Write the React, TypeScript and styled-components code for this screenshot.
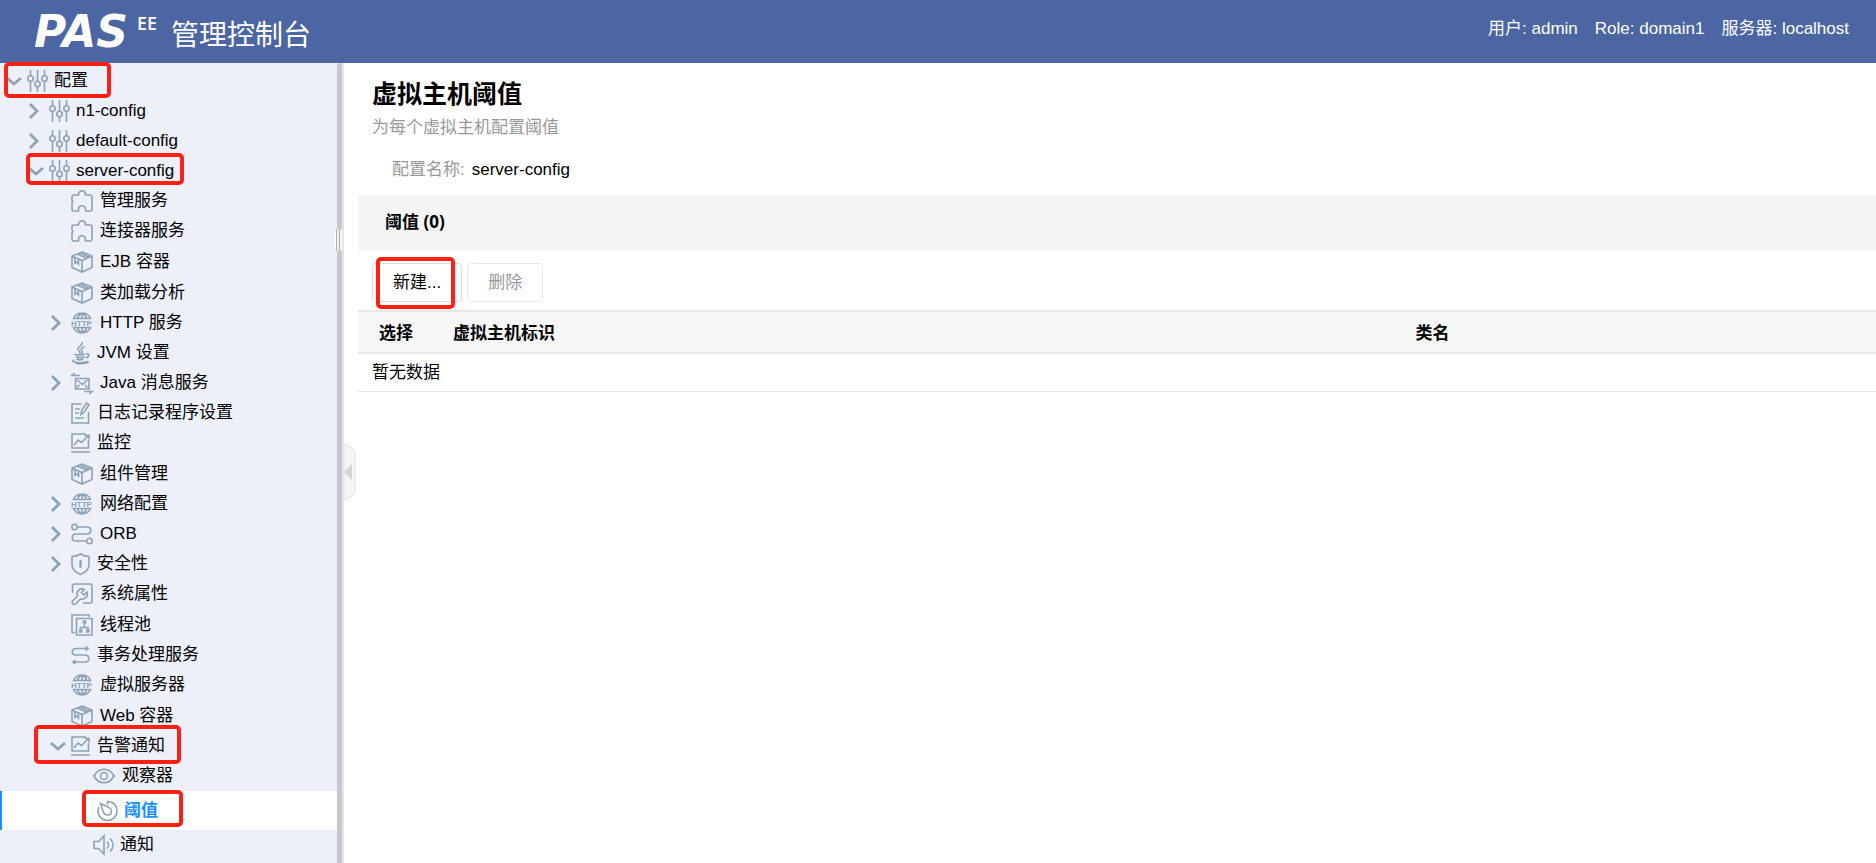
import React from "react";
import styled, { createGlobalStyle, css } from "styled-components";

const GlobalStyle = createGlobalStyle`
  * { box-sizing: border-box; }
  body {
    margin: 0;
    background: #ffffff;
    color: #000000;
    font-family: "Liberation Sans", "Noto Sans CJK SC", sans-serif;
    font-size: 17px;
    line-height: 24px;
  }
`;

const Page = styled.div`
  display: flex;
  flex-direction: column;
  height: 100vh;
  overflow: hidden;
`;

const TopBar = styled.header`
  flex: none;
  display: flex;
  justify-content: space-between;
  height: 63px;
  padding: 0 27px 0 34px;
  background: #4c66a3;
  color: #ffffff;
`;

const Brand = styled.div`
  display: flex;
  align-items: flex-start;
`;

const LogoText = styled.span`
  margin-top: 10px;
  font: italic bold 44px/44px "DejaVu Sans", sans-serif;
`;

const Edition = styled.sup`
  margin: 13px 14px 0 9px;
  font: 600 18px/20px "Open Sans", sans-serif;
`;

const ProductName = styled.span`
  margin-top: 16px;
  font-size: 28px;
  line-height: 40px;
`;

const SessionInfo = styled.div`
  display: flex;
  gap: 17px;
  padding-top: 17px;
  white-space: nowrap;
`;

const Body = styled.div`
  flex: 1;
  display: flex;
  min-height: 0;
`;

const Sidebar = styled.nav`
  flex: none;
  width: 337px;
  padding-top: 3px;
  background: #edf0f8;
`;

const TreeList = styled.ul`
  margin: 0;
  padding: 0;
  list-style: none;
`;

const Row = styled.div<{ $depth: number; $tall?: boolean; $selected?: boolean }>`
  position: relative;
  display: flex;
  align-items: center;
  height: ${(p) => (p.$selected ? 39 : p.$tall ? 31 : 30)}px;
  padding-left: ${(p) => 5 + p.$depth * 22}px;
  ${(p) =>
    p.$selected &&
    css`
      padding-left: ${7 + p.$depth * 22}px;
      border-left: 2px solid #1890ff;
      background: #ffffff;
      color: #1890ff;
      font-weight: bold;
    `}
`;

const Toggle = styled.button`
  display: flex;
  align-items: center;
  width: 22px;
  height: 22px;
  padding: 0;
  border: 0;
  background: none;
`;

const ToggleSpace = styled.span`
  width: 22px;
`;

const ItemLink = styled.a`
  display: flex;
  align-items: center;
  gap: 7px;
  color: inherit;
  text-decoration: none;
  white-space: nowrap;
`;

const Glyph = styled.svg`
  flex: none;
  display: block;
  fill: none;
  stroke: #8ea2b6;
  stroke-width: 1.6;
  overflow: visible;
`;

const Mark = styled.span<{ $top: number; $left: number; $width: number; $height: number }>`
  position: absolute;
  z-index: 2;
  top: ${(p) => p.$top}px;
  left: ${(p) => p.$left}px;
  width: ${(p) => p.$width}px;
  height: ${(p) => p.$height}px;
  border: 4px solid #ff2014;
  border-radius: 5px;
  pointer-events: none;
`;

const Splitter = styled.div`
  position: relative;
  flex: none;
  width: 7px;
  border-right: 2px solid #e6e6e6;
  background: #c5c9ce;
  border-top-left-radius: 3px;
`;

const Grip = styled.span`
  position: absolute;
  top: 166px;
  left: -2px;
  width: 7px;
  height: 22px;
  border: 1px solid #ffffff;
  border-width: 0 1px;
  background: linear-gradient(to right, #b0b0b0 1px, #eeeeee 1px 3px, #b0b0b0 3px 4px, #eeeeee 4px);
`;

const CollapseButton = styled.button`
  position: absolute;
  top: 380px;
  left: 7px;
  width: 12px;
  height: 58px;
  padding: 0;
  border: 0;
  background: none;
`;

const Main = styled.main`
  flex: 1;
  min-width: 0;
  padding: 14px 0 0 14px;
`;

const Title = styled.h1`
  margin: 0 0 0 14px;
  font-size: 25px;
  line-height: 34px;
`;

const Description = styled.p`
  margin: 5px 0 0 14px;
  color: #999999;
`;

const Property = styled.dl`
  display: flex;
  gap: 7px;
  margin: 18px 0 13px 34px;
  dt { color: #999999; }
  dd { margin: 0; }
`;

const TableTitle = styled.h2`
  margin: 0;
  padding: 0 0 1px 27px;
  background: #f4f4f4;
  font: bold 17px/54px "Open Sans", "Noto Sans CJK SC", sans-serif;
`;

const Actions = styled.div`
  display: flex;
  gap: 5px;
  padding: 13px 14px 8px;
`;

const ActionSlot = styled.span`
  position: relative;
`;

const ActionButton = styled.button`
  height: 39px;
  padding: 0 20px;
  border: 1px solid #d9dbe6;
  border-radius: 4px;
  background: #ffffff;
  color: #000000;
  font: inherit;
  &:disabled {
    border-color: #e9eaf2;
    color: #999999;
  }
`;

const DataTable = styled.table`
  width: 100%;
  table-layout: fixed;
  border-collapse: separate;
  border-spacing: 0;
  th {
    height: 44px;
    padding: 3px 14px 0;
    border: 2px solid #e7e7e7;
    border-width: 2px 0;
    background: #f6f6f6;
    text-align: left;
  }
  th:first-child {
    width: 81px;
    padding: 3px 0 0 21px;
  }
  th:nth-child(2) { width: 63.4%; }
  td {
    height: 38px;
    padding: 0 14px;
    border-bottom: 1px solid #e7e7e7;
  }
`;

type IconName =
  | "sliders" | "puzzle" | "cube" | "http" | "java" | "message" | "log" | "chart"
  | "orb" | "shield" | "wrench" | "pool" | "transfer" | "eye" | "gauge" | "speaker";

const iconWidths: Partial<Record<IconName, number>> = {
  sliders: 20, java: 19, log: 19, chart: 19, shield: 19, transfer: 19, gauge: 20, speaker: 20,
};

const tallIcons: IconName[] = ["cube", "pool"];

const drawings: Record<IconName, React.ReactNode> = {
  sliders: (
    <>
      <path d="M3.5 0v6M3.5 11v11M10.5 0v11.5M10.5 17v5M17.5 0v6M17.5 11v11" />
      <circle cx="3.5" cy="8.5" r="2.7" /><circle cx="10.5" cy="14" r="2.7" /><circle cx="17.5" cy="8.5" r="2.7" />
    </>
  ),
  puzzle: <path d="M3 5h4.5C7.5-.5 14.5-.5 14.5 5H19q2 0 2 2v12q0 2-2 2h-4.5v-1.5c0-5-7-5-7 0V21H3q-2 0-2-2v-6.5c1-.5 1-2 0-2.500V7q0-2 2-2z" />,
  cube: (
    <>
      <path d="M11 1l10 4v11.5L11 21 1 16.500V5zM1 5l10 4.500L21 5M11 9.500V21" />
      <path d="M6 3l10 4.300M9 2l9.500 4.200M4 6.800v5.500l1.700-1.500L7.500 13V8.500" />
    </>
  ),
  http: (
    <>
      <path d="M2.500 6.500C4 3 7 1 11 1s7 2 8.500 5.500zM2.500 15.500C4 19 7 21 11 21s7-2 8.500-5.500zM11 1v5.500M11 15.500V21M6.500 6.500C7 4 8.500 2 11 1c2.500 1 4 3 4.500 5.500M6.500 15.500c.5 2.500 2 4.500 4.500 5.500 2.500-1 4-3 4.500-5.500" />
      <text x="0" y="14" fontSize="8" fontWeight="bold" fill="#8ea2b6" stroke="none" fontFamily="Liberation Sans, sans-serif">HTTP</text>
    </>
  ),
  java: (
    <>
      <path d="M10.500 0c3 3-6 5-3 8 1 1 2 2 1 3.500M13.500 4.500c-4 2-4 3-2.500 4.500 1 1 0 2-1 2.500" />
      <path d="M4 12c-1 1.200 8 1.200 10 0M5 14.500c2 1.200 6 1.200 8.500 0M5.500 17c2 1 5 1 7 0M15 12c4-1 3.500 3-.5 4M3.500 18c-7 2.500 10 4 13 1.200M18 20c-2 1.700-9 2-13 1.500" />
    </>
  ),
  message: (
    <>
      <path d="M4.500 6.500h13.500v10.500h-13.500zM6 8l5.300 4.500L16.500 8M6 15.500l2.500-2.500M16.500 15.500L14 13" />
      <path d="M9 3.500H1l3-2.500M13 19.500h8l-3 2.500" />
    </>
  ),
  log: (
    <>
      <path d="M10.500 2H1v19h16.500V10M4 7h5M4 11h4M4 16h9" />
      <path d="M10 12.500l.5-4L15.500 1l2.500 1.700-5 7.500z" />
    </>
  ),
  chart: <path d="M15 2H1v14h16.500V8M0 20h19M3 13l4-5 3.500 2.500L17 4M13.500 3.500H18V7.500" />,
  orb: (
    <>
      <circle cx="3.500" cy="4" r="2.700" /><circle cx="18.500" cy="18" r="2.700" />
      <path d="M6.500 4H16c5 0 5 7 0 7H5c-5 0-5 7 0 7h10.500" />
    </>
  ),
  shield: (
    <>
      <path d="M9.500 1c3 1.700 5.500 2.500 8.500 2.500V12c0 4.500-4 7.500-8.500 9.500C5 19.500 1 16.500 1 12V3.500c3 0 5.500-.8 8.500-2.500z" />
      <path d="M9.500 7v8" strokeWidth="2.200" />
    </>
  ),
  wrench: (
    <>
      <path d="M1.500 10V3q0-2 2-2H19q2 0 2 2v15q0 2-2 2h-7" />
      <path d="M1.500 18l5-5C5 8 9 4.500 13.500 6.500L10.500 9.500l2.500 2.500 3-3C17.500 13.500 14 17 9.500 16l-5 5q-2 1-3-.5-1-1 0-2.500z" />
    </>
  ),
  pool: (
    <>
      <path d="M4 18.500H1V1h17v2M5.500 4.500H21V21H5.500zM13.500 9.500v4M9.500 16v-2.500H17V16" />
      <path d="M12.500 7h2v2h-2zM8.700 16h2v2h-2zM15.800 16h2v2h-2z" />
    </>
  ),
  transfer: (
    <>
      <path d="M16 4.500H5c-5 0-5 6.500 0 6.500h9c5 0 5 7 0 7H3" />
      <path d="M14.500 1.500l4 3-4 3zM4.500 15l-4 3 4 3z" fill="#8ea2b6" stroke="none" />
    </>
  ),
  eye: (
    <>
      <path d="M1 11C6 2 16 2 21 11 16 20 6 20 1 11z" /><circle cx="11" cy="11" r="3.500" />
    </>
  ),
  gauge: (
    <>
      <path d="M10.500 5V1.500C17 1.500 20 6 20 11c0 5.500-4.500 9.500-9.500 9.500S1 16.500 1 11c0-1.500.3-2.800 1-4" />
      <path d="M3.500 3.500l7.500 3.500c5 2 4 8 0 8-3 0-4.500-1.500-5-4z" />
    </>
  ),
  speaker: <path d="M1 7.500h4.500L11 2v18l-5.500-5.500H1zM14 7.500c2 2 2 5 0 7M17 4.500c4 4 4 9 0 13" />,
};

function Icon({ name }: { name: IconName }) {
  const width = iconWidths[name] ?? 22;
  return (
    <Glyph width={width} height={22} viewBox={`0 0 ${width} 22`} aria-hidden="true">
      {drawings[name]}
    </Glyph>
  );
}

function Chevron({ open }: { open: boolean }) {
  return (
    <Glyph width={16} height={16} viewBox="0 0 16 16" aria-hidden="true">
      <path d={open ? "M2 5l7 6 7-6" : "M3 1l7 7-7 7"} strokeWidth={2.8} />
    </Glyph>
  );
}

type MarkBox = [top: number, left: number, width: number, height: number];

interface TreeNode {
  label: string;
  icon: IconName;
  open?: boolean;
  selected?: boolean;
  mark?: MarkBox;
  children?: TreeNode[];
}

const tree: TreeNode[] = [
  {
    label: "配置", icon: "sliders", open: true, mark: [-4, 4, 107, 36],
    children: [
      { label: "n1-config", icon: "sliders", open: false },
      { label: "default-config", icon: "sliders", open: false },
      {
        label: "server-config", icon: "sliders", open: true, mark: [-3, 26, 158, 32],
        children: [
          { label: "管理服务", icon: "puzzle" },
          { label: "连接器服务", icon: "puzzle" },
          { label: "EJB 容器", icon: "cube" },
          { label: "类加载分析", icon: "cube" },
          { label: "HTTP 服务", icon: "http", open: false },
          { label: "JVM 设置", icon: "java" },
          { label: "Java 消息服务", icon: "message", open: false },
          { label: "日志记录程序设置", icon: "log" },
          { label: "监控", icon: "chart" },
          { label: "组件管理", icon: "cube" },
          { label: "网络配置", icon: "http", open: false },
          { label: "ORB", icon: "orb", open: false },
          { label: "安全性", icon: "shield", open: false },
          { label: "系统属性", icon: "wrench" },
          { label: "线程池", icon: "pool" },
          { label: "事务处理服务", icon: "transfer" },
          { label: "虚拟服务器", icon: "http" },
          { label: "Web 容器", icon: "cube" },
          {
            label: "告警通知", icon: "chart", open: true, mark: [-6, 34, 147, 39],
            children: [
              { label: "观察器", icon: "eye" },
              { label: "阈值", icon: "gauge", selected: true, mark: [-1, 80, 101, 37] },
              { label: "通知", icon: "speaker" },
            ],
          },
        ],
      },
    ],
  },
];

function Highlight({ box }: { box: MarkBox }) {
  const [top, left, width, height] = box;
  return <Mark $top={top} $left={left} $width={width} $height={height} />;
}

function Branch({ nodes, depth = 0 }: { nodes: TreeNode[]; depth?: number }) {
  return (
    <TreeList>
      {nodes.map((node) => (
        <li key={node.label}>
          <Row $depth={depth} $tall={tallIcons.includes(node.icon)} $selected={node.selected}>
            {node.open === undefined ? (
              <ToggleSpace />
            ) : (
              <Toggle type="button" aria-label={node.label} aria-expanded={node.open}>
                <Chevron open={node.open} />
              </Toggle>
            )}
            <ItemLink href="#" aria-current={node.selected ? "page" : undefined}>
              <Icon name={node.icon} />
              <span>{node.label}</span>
            </ItemLink>
            {node.mark && <Highlight box={node.mark} />}
          </Row>
          {node.children && <Branch nodes={node.children} depth={depth + 1} />}
        </li>
      ))}
    </TreeList>
  );
}

export default function App() {
  return (
    <Page>
      <GlobalStyle />
      <TopBar>
        <Brand>
          <LogoText>PAS</LogoText>
          <Edition>EE</Edition>
          <ProductName>管理控制台</ProductName>
        </Brand>
        <SessionInfo>
          <span>用户: admin</span>
          <span>Role: domain1</span>
          <span>服务器: localhost</span>
        </SessionInfo>
      </TopBar>
      <Body>
        <Sidebar>
          <Branch nodes={tree} />
        </Sidebar>
        <Splitter>
          <Grip />
          <CollapseButton type="button" aria-label="收起">
            <svg width="12" height="58" viewBox="0 0 12 58" aria-hidden="true">
              <path d="M0 .5l8 4.500q3 2 3 5v38q0 3-3 5L0 57.500z" fill="#f4f4f4" stroke="#e0e4e8" />
              <path d="M8 21v16L0 29z" fill="#d6d6d6" />
            </svg>
          </CollapseButton>
        </Splitter>
        <Main>
          <Title>虚拟主机阈值</Title>
          <Description>为每个虚拟主机配置阈值</Description>
          <Property>
            <dt>配置名称:</dt>
            <dd>server-config</dd>
          </Property>
          <TableTitle>阈值 (0)</TableTitle>
          <Actions>
            <ActionSlot>
              <ActionButton type="button">新建...</ActionButton>
              <Highlight box={[-6, 4, 79, 52]} />
            </ActionSlot>
            <ActionButton type="button" disabled>删除</ActionButton>
          </Actions>
          <DataTable>
            <thead>
              <tr>
                <th scope="col">选择</th>
                <th scope="col">虚拟主机标识</th>
                <th scope="col">类名</th>
              </tr>
            </thead>
            <tbody>
              <tr>
                <td colSpan={3}>暂无数据</td>
              </tr>
            </tbody>
          </DataTable>
        </Main>
      </Body>
    </Page>
  );
}
